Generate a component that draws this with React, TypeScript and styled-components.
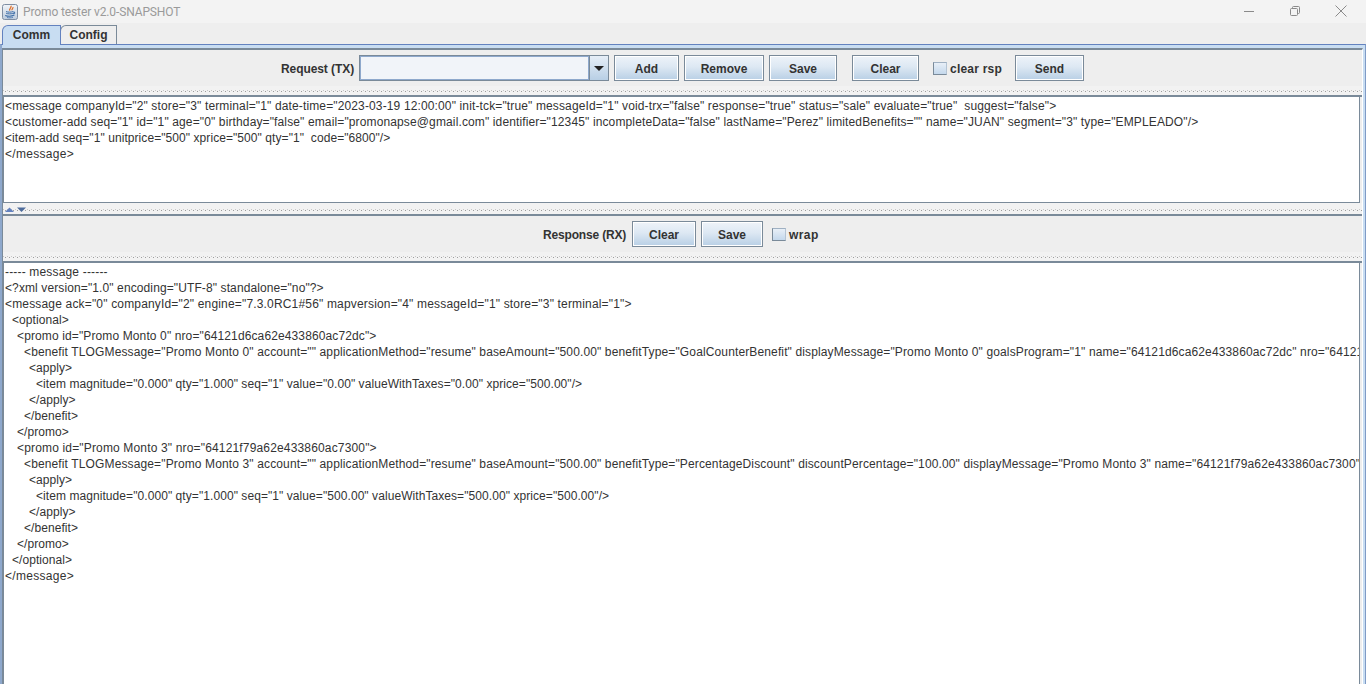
import React from "react";
import styled, { createGlobalStyle } from "styled-components";

const Global = createGlobalStyle`
  html, body { margin: 0; padding: 0; height: 100%; overflow: hidden; background: #eeeeee; }
  #root { height: 100%; }
  * { box-sizing: border-box; }
`;

const Window = styled.div`
  height: 684px;
  width: 1366px;
  display: flex;
  flex-direction: column;
  font-family: "Liberation Sans", Arial, sans-serif;
  font-size: 12px;
  background: #eeeeee;
  overflow: hidden;
`;

const TitleBar = styled.div`
  height: 23px;
  flex: none;
  display: flex;
  align-items: center;
  background: #f3f3f3;
  padding-left: 2px;
`;

const TitleText = styled.span`
  margin-left: 5px;
  font-family: Roboto, "Liberation Sans", sans-serif;
  font-size: 12px;
  letter-spacing: -0.12px;
  color: #9a9a9a;
  flex: 1;
`;

const WinButton = styled.div`
  width: 46px;
  height: 21px;
  display: flex;
  align-items: center;
  justify-content: center;
`;

const WinControls = styled.div`
  display: flex;
  padding-right: 2px;
  align-self: flex-start;
`;

const TabStrip = styled.div`
  height: 21px;
  flex: none;
  display: flex;
  align-items: flex-start;
  padding: 2px 0 0 2px;
  background: #eeeeee;
`;

const Tab = styled.div<{ $active?: boolean; $w: number }>`
  width: ${(p) => p.$w}px;
  height: ${(p) => (p.$active ? 20 : 19)}px;
  display: flex;
  align-items: center;
  justify-content: center;
  padding-bottom: ${(p) => (p.$active ? 1 : 0)}px;
  font-weight: bold;
  color: #333333;
  border: 1px solid ${(p) => (p.$active ? "#6382bf" : "#7a8a99")};
  border-bottom: none;
  border-top-left-radius: 6px;
  background: ${(p) => (p.$active ? "#c8ddf2" : "#eeeeee")};
  margin-right: ${(p) => (p.$active ? "-1px" : "0")};
  position: relative;
  z-index: ${(p) => (p.$active ? 1 : 0)};
`;

const TabBody = styled.div`
  flex: 1;
  min-height: 0;
  display: flex;
  flex-direction: column;
  border-top: 1px solid #6382bf;
  border-left: 2px solid #8ea8cc;
  border-right: 1px solid #7f9bc6;
  background: #c8ddf2;
  padding: 3px 2px 0 0;
`;

const Content = styled.div`
  flex: 1;
  min-height: 0;
  display: flex;
  flex-direction: column;
  background: #eeeeee;
  border-top: 2px solid #7a8a99;
  border-left: 1px solid #7a8a99;
  border-right: 1px solid #ffffff;
`;

const Toolbar = styled.div`
  height: 36px;
  flex: none;
  display: flex;
  align-items: center;
  justify-content: center;
  gap: 5px;
  background: #eeeeee;
`;

const Divider = styled.div<{ $h: number }>`
  height: ${(p) => p.$h}px;
  flex: none;
  position: relative;
  background-color: #f2f2f2;
  border-bottom: 2px solid #7a8a99;
  background-image:
    linear-gradient(90deg, #9c9c9c 1px, transparent 1px),
    linear-gradient(90deg, #c8c8c8 1px, transparent 1px);
  background-size: 4px 1px, 4px 1px;
  background-repeat: repeat-x;
  background-position: 2px calc(100% - 3px), 0 calc(100% - 4px);
`;

const Arrows = styled.svg`
  position: absolute;
  left: 2px;
  top: 4px;
  display: block;
`;

const Label = styled.span<{ $w: number; $ls?: number }>`
  width: ${(p) => p.$w}px;
  padding-top: 2px;
  font-weight: bold;
  color: #333333;
  white-space: nowrap;
  letter-spacing: ${(p) => p.$ls ?? 0}px;
`;

const Combo = styled.div`
  width: 250px;
  height: 26px;
  display: flex;
  border: 1px solid #7a8a99;
  background: #ffffff;
`;

const ComboField = styled.div`
  flex: 1;
  background: #f1f4f9;
  border: 1px solid #8ea8cc;
`;

const ComboArrow = styled.div`
  width: 19px;
  border-left: 1px solid #7a8a99;
  background: linear-gradient(#e6eef7, #b8cfe5);
  display: flex;
  align-items: center;
  justify-content: center;
`;

const Button = styled.div<{ $w: number; $ml?: number }>`
  width: ${(p) => p.$w}px;
  height: 26px;
  margin-left: ${(p) => p.$ml ?? 0}px;
  padding-top: 2px;
  display: flex;
  align-items: center;
  justify-content: center;
  border: 1px solid #7a8a99;
  box-shadow: inset 0 0 0 1px #ffffff;
  background: linear-gradient(#eef3f9 0%, #dde8f3 45%, #b8cfe5 100%);
  font-weight: bold;
  color: #333333;
`;

const CheckGroup = styled.div<{ $ml: number; $mr: number }>`
  display: flex;
  align-items: center;
  gap: 3px;
  margin-left: ${(p) => p.$ml}px;
  margin-right: ${(p) => p.$mr}px;
`;

const Box = styled.div`
  width: 14px;
  height: 13px;
  border: 1px solid #7a8a99;
  border-top-color: #9fb0c2;
  border-right-color: #b4c4d4;
  background: linear-gradient(#e8eff7, #c4d8ec);
`;

const EditorArea = styled.div<{ $h?: number }>`
  margin: 0 2px 0 0;
  ${(p) => (p.$h ? `height: ${p.$h}px; flex: none;` : "flex: 1; min-height: 0;")}
  overflow: hidden;
  background: #ffffff;
  border: 1px solid #7a8a99;
  border-top: none;
  ${(p) => (p.$h ? "" : "border-bottom: none;")}
  padding: 1px 0 0 1px;
  font-size: 12px;
  line-height: 16px;
  color: #333333;
`;

const Line = styled.div<{ $ls: number; $indent: number }>`
  white-space: pre;
  height: 16px;
  letter-spacing: ${(p) => p.$ls}px;
  padding-left: ${(p) => p.$indent}px;
`;

const JavaIcon = () => (
  <svg width="16" height="16" viewBox="0 0 16 16">
    <defs>
      <linearGradient id="jg" x1="0" y1="0" x2="0" y2="1">
        <stop offset="0" stopColor="#f2f5f9" />
        <stop offset="1" stopColor="#bccbdd" />
      </linearGradient>
    </defs>
    <rect x="0.5" y="0.5" width="15" height="15" rx="2" fill="url(#jg)" stroke="#7f8ea3" />
    <path d="M8.8 1.8c1.6 1.7-2.4 2.8-.9 4.8M10.8 3.2c.8 1-1.4 1.7-.7 3" stroke="#e0702a" strokeWidth="1.3" fill="none" />
    <path d="M4 7.6c2 .7 5 .7 7 0" stroke="#3f6fa8" strokeWidth="1" fill="none" />
    <path d="M4.2 9.4c2 .6 4.6.6 6.6 0M11 8h1.6v1.6H10.8" stroke="#3f6fa8" strokeWidth="1" fill="none" />
    <path d="M3.2 11.4c2.5 1 6.4 1 9.2-.3" stroke="#3f6fa8" strokeWidth="1.1" fill="none" />
    <path d="M5 13.5c2 .5 4 .4 6-.2" stroke="#5f86b8" strokeWidth="1" fill="none" />
  </svg>
);

type Row = { text: string; ls: number; level?: number };

const indents = [0, 7, 12, 19, 24, 31];

const request: Row[] = [
  { ls: 0.135, text: `<message companyId="2" store="3" terminal="1" date-time="2023-03-19 12:00:00" init-tck="true" messageId="1" void-trx="false" response="true" status="sale" evaluate="true"  suggest="false">` },
  { ls: 0.13, text: `<customer-add seq="1" id="1" age="0" birthday="false" email="promonapse@gmail.com" identifier="12345" incompleteData="false" lastName="Perez" limitedBenefits="" name="JUAN" segment="3" type="EMPLEADO"/>` },
  { ls: 0.07, text: `<item-add seq="1" unitprice="500" xprice="500" qty="1"  code="6800"/>` },
  { ls: 0.3, text: `</message>` },
];

const response: Row[] = [
  { ls: 0.17, text: `----- message ------` },
  { ls: 0.11, text: `<?xml version="1.0" encoding="UTF-8" standalone="no"?>` },
  { ls: 0.17, text: `<message ack="0" companyId="2" engine="7.3.0RC1#56" mapversion="4" messageId="1" store="3" terminal="1">` },
  { ls: 0.07, level: 1, text: `<optional>` },
  { ls: 0.12, level: 2, text: `<promo id="Promo Monto 0" nro="64121d6ca62e433860ac72dc">` },
  { ls: 0.13, level: 3, text: `<benefit TLOGMessage="Promo Monto 0" account="" applicationMethod="resume" baseAmount="500.00" benefitType="GoalCounterBenefit" displayMessage="Promo Monto 0" goalsProgram="1" name="64121d6ca62e433860ac72dc" nro="64121d6ca62e433860ac72dc">` },
  { ls: 0.07, level: 4, text: `<apply>` },
  { ls: 0.07, level: 5, text: `<item magnitude="0.000" qty="1.000" seq="1" value="0.00" valueWithTaxes="0.00" xprice="500.00"/>` },
  { ls: 0.07, level: 4, text: `</apply>` },
  { ls: 0.07, level: 3, text: `</benefit>` },
  { ls: 0.07, level: 2, text: `</promo>` },
  { ls: 0.16, level: 2, text: `<promo id="Promo Monto 3" nro="64121f79a62e433860ac7300">` },
  { ls: 0.13, level: 3, text: `<benefit TLOGMessage="Promo Monto 3" account="" applicationMethod="resume" baseAmount="500.00" benefitType="PercentageDiscount" discountPercentage="100.00" displayMessage="Promo Monto 3" name="64121f79a62e433860ac7300" nro="64121f79a62e433860ac7300">` },
  { ls: 0.07, level: 4, text: `<apply>` },
  { ls: 0.07, level: 5, text: `<item magnitude="0.000" qty="1.000" seq="1" value="500.00" valueWithTaxes="500.00" xprice="500.00"/>` },
  { ls: 0.07, level: 4, text: `</apply>` },
  { ls: 0.07, level: 3, text: `</benefit>` },
  { ls: 0.07, level: 2, text: `</promo>` },
  { ls: 0.07, level: 1, text: `</optional>` },
  { ls: 0.3, text: `</message>` },
];

const Lines = ({ rows }: { rows: Row[] }) => (
  <>
    {rows.map((r, i) => (
      <Line key={i} $ls={r.ls} $indent={indents[r.level ?? 0]}>{r.text}</Line>
    ))}
  </>
);

export default function App() {
  return (
    <Window>
      <Global />
      <TitleBar>
        <JavaIcon />
        <TitleText>Promo tester v2.0-SNAPSHOT</TitleText>
        <WinControls>
          <WinButton>
            <svg width="12" height="12" viewBox="0 0 12 12"><path d="M1 6.5h10" stroke="#8a8a8a" /></svg>
          </WinButton>
          <WinButton>
            <svg width="12" height="12" viewBox="0 0 12 12" fill="none" stroke="#8a8a8a"><rect x="1.5" y="3.5" width="7" height="7" rx="1" /><path d="M3.5 3.5V2.5a1 1 0 0 1 1-1h5a1 1 0 0 1 1 1v5a1 1 0 0 1-1 1h-1" /></svg>
          </WinButton>
          <WinButton>
            <svg width="12" height="12" viewBox="0 0 12 12"><path d="M.5.5l11 11M11.5.5l-11 11" stroke="#8a8a8a" /></svg>
          </WinButton>
        </WinControls>
      </TitleBar>
      <TabStrip>
        <Tab $active $w={59}>Comm</Tab>
        <Tab $w={57}>Config</Tab>
      </TabStrip>
      <TabBody>
        <Content>
          <Toolbar>
            <Label $w={73} $ls={-0.08}>Request (TX)</Label>
            <Combo>
              <ComboField />
              <ComboArrow>
                <svg width="10" height="5" viewBox="0 0 10 5"><path d="M0 0h10L5 5z" fill="#222" /></svg>
              </ComboArrow>
            </Combo>
            <Button $w={65}>Add</Button>
            <Button $w={80}>Remove</Button>
            <Button $w={68}>Save</Button>
            <Button $w={67} $ml={10}>Clear</Button>
            <CheckGroup $ml={9} $mr={9}>
              <Box />
              <Label $w={51} $ls={0.22}>clear rsp</Label>
            </CheckGroup>
            <Button $w={69}>Send</Button>
          </Toolbar>
          <Divider $h={11} />
          <EditorArea $h={106}><Lines rows={request} /></EditorArea>
          <Divider $h={13}>
            <Arrows width="22" height="6" viewBox="0 0 22 6">
              <path d="M0 5L4.5 .5 9 5z" fill="#6382bf" />
              <path d="M12 .5h9L16.5 5z" fill="#4f6d9c" />
            </Arrows>
          </Divider>
          <Toolbar>
            <Label $w={84} $ls={-0.17}>Response (RX)</Label>
            <Button $w={64}>Clear</Button>
            <Button $w={62}>Save</Button>
            <CheckGroup $ml={4} $mr={4}>
              <Box />
              <Label $w={29} $ls={0.4}>wrap</Label>
            </CheckGroup>
          </Toolbar>
          <Divider $h={11} />
          <EditorArea><Lines rows={response} /></EditorArea>
        </Content>
      </TabBody>
    </Window>
  );
}
